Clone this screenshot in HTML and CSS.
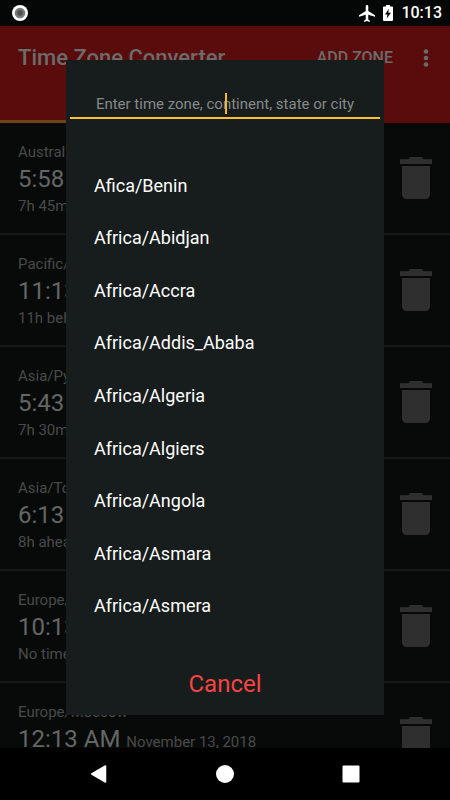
FILE: index.html
```html
<!DOCTYPE html>
<html lang="en">
<head>
<meta charset="utf-8">
<meta name="viewport" content="width=device-width, initial-scale=1">
<title>Time Zone Converter</title>
<link rel="stylesheet" href="styles.css">
</head>
<body>
<svg class="defs" aria-hidden="true">
  <symbol id="trash" viewBox="0 0 32 42">
    <path d="M0 2.300h8.500L10.500 0h11l2 2.300H32V7H0z"/>
    <path d="M2 9h28v28.500a4.500 4.500 0 0 1-4.500 4.500h-19A4.500 4.500 0 0 1 2 37.500z"/>
  </symbol>
</svg>
<div class="screen">
  <header class="status">
    <svg class="record" width="16" height="16" viewBox="0 0 16 16" aria-hidden="true">
      <circle cx="8" cy="8" r="8" fill="#fff"/><circle cx="8" cy="8" r="5.300" fill="#77797a"/><circle cx="8" cy="8" r="2.800" fill="#4c4e4f"/>
    </svg>
    <div class="status-end">
      <svg width="16" height="17" viewBox="2 2 19 20" aria-hidden="true"><path fill="#fff" d="M21 16v-2l-8-5V3.500a1.500 1.500 0 0 0-3 0V9l-8 5v2l8-2.500V19l-2 1.500V22l3.500-1 3.500 1v-1.500L13 19v-5.500z"/></svg>
      <svg width="10" height="16" viewBox="0 0 10 16" aria-hidden="true"><path fill="#fff" d="M3 0h4v1.500h2a1 1 0 0 1 1 1V15a1 1 0 0 1-1 1H1a1 1 0 0 1-1-1V2.500a1 1 0 0 1 1-1h2z"/><path fill="#050706" d="M5.800 3.800 2 9.500h2.400L3.700 13.500 8 7.800H5.300z"/></svg>
      <span class="clock">10:13</span>
    </div>
  </header>
  <main class="app">
    <div class="appbar">
      <div class="toolbar">
        <h1>Time Zone Converter</h1>
        <button class="add" type="button">ADD ZONE</button>
        <button class="more" type="button" aria-label="More options">
          <svg width="6" height="18" viewBox="0 0 6 18"><circle cx="3" cy="2.500" r="2.300"/><circle cx="3" cy="9" r="2.300"/><circle cx="3" cy="15.500" r="2.300"/></svg>
        </button>
      </div>
      <div class="tabs"><div class="tab active"></div><div class="tab"></div></div>
    </div>
    <ul class="zones">
      <li><div class="info"><p>Australia/Eucla</p><p class="time">5:58</p><p>7h 45m ahead</p></div><button type="button" aria-label="Delete"><svg><use href="#trash"/></svg></button></li>
      <li><div class="info"><p>Pacific/Midway</p><p class="time">11:13</p><p>11h behind</p></div><button type="button" aria-label="Delete"><svg><use href="#trash"/></svg></button></li>
      <li><div class="info"><p>Asia/Pyongyang</p><p class="time">5:43</p><p>7h 30m ahead</p></div><button type="button" aria-label="Delete"><svg><use href="#trash"/></svg></button></li>
      <li><div class="info"><p>Asia/Tokyo</p><p class="time">6:13</p><p>8h ahead</p></div><button type="button" aria-label="Delete"><svg><use href="#trash"/></svg></button></li>
      <li><div class="info"><p>Europe/London</p><p class="time">10:13</p><p>No time difference</p></div><button type="button" aria-label="Delete"><svg><use href="#trash"/></svg></button></li>
      <li><div class="info"><p>Europe/Moscow</p><p class="time">12:13 AM <small>November 13, 2018</small></p></div><button type="button" aria-label="Delete"><svg><use href="#trash"/></svg></button></li>
    </ul>
    <div class="overlay">
      <div class="dialog" role="dialog" aria-label="Add zone">
        <div class="search">
          <input type="text" aria-label="Time zone" placeholder="Enter time zone, continent, state or city">
          <span class="caret"></span>
        </div>
        <ul class="results">
          <li>Afica/Benin</li>
          <li>Africa/Abidjan</li>
          <li>Africa/Accra</li>
          <li>Africa/Addis_Ababa</li>
          <li>Africa/Algeria</li>
          <li>Africa/Algiers</li>
          <li>Africa/Angola</li>
          <li>Africa/Asmara</li>
          <li>Africa/Asmera</li>
        </ul>
        <button class="cancel" type="button">Cancel</button>
      </div>
    </div>
  </main>
  <nav class="nav">
    <button type="button" aria-label="Back"><svg width="18" height="18" viewBox="0 0 18 18"><path d="M15.500 1v16L1.800 9z" stroke="#fff" stroke-width="1.500" stroke-linejoin="round"/></svg></button>
    <button type="button" aria-label="Home"><svg width="18" height="18" viewBox="0 0 18 18"><circle cx="9" cy="9" r="9"/></svg></button>
    <button type="button" aria-label="Recent"><svg width="18" height="18" viewBox="0 0 18 18"><rect x="0.500" y="0.500" width="17" height="17" rx="1"/></svg></button>
  </nav>
</div>
</body>
</html>
```

FILE: styles.css
```css
* { box-sizing: border-box; }
body, h1, p, ul { margin: 0; padding: 0; }
body { background: #000; color: #fff; font-family: Roboto, sans-serif; }
ul { list-style: none; }
button { background: none; border: 0; padding: 0; font: inherit; color: inherit; display: block; }
svg { display: block; }
.defs { position: absolute; width: 0; height: 0; }

.screen { display: flex; flex-direction: column; height: 100vh; }

.status {
  display: flex; align-items: center; justify-content: space-between;
  height: 26px; padding: 0 8px 0 12px; background: #050706; flex: none;
}
.status-end { display: flex; align-items: center; gap: 8px; }
.clock { font-size: 16px; line-height: 24px; font-weight: 500; }

.app { position: relative; flex: 1; min-height: 0; overflow: hidden; background: #080a09; }
.appbar { background: #5a0c0c; color: #6b6b6b; }
.toolbar { display: flex; align-items: center; height: 64px; padding: 0 21px 0 18px; }
.toolbar h1 { flex: 1; font-size: 22px; line-height: 28px; font-weight: 500; }
.add { font-size: 16px; line-height: 24px; font-weight: 500; }
.more { margin-left: 30px; fill: #6b6b6b; }
.tabs { display: flex; height: 33px; }
.tab { flex: 1; }
.tab.active { border-bottom: 3px solid #6e4514; }

.zones li {
  display: flex; justify-content: space-between; align-items: flex-start;
  height: 112px; padding: 18px 18px 0; border-bottom: 2px solid #161817;
}
.info { color: #484a49; font-size: 15px; line-height: 22px; }
.time { color: #646665; font-size: 24px; line-height: 32px; }
.time small { color: #484a49; font-size: 15px; }
.zones button { padding-top: 16px; }
.zones svg { width: 32px; height: 42px; fill: #2f2f2f; }

.overlay { position: absolute; inset: 0; display: flex; align-items: center; justify-content: center; }
.dialog {
  display: flex; flex-direction: column; width: calc(100% - 132px);
  padding: 28px 4px 15px; background: #171c1c;
}
.search { position: relative; }
.search input {
  display: block; width: 100%; height: 31px; padding: 3px 0 0; border: 0;
  border-bottom: 2px solid #fbc02d; background: none; outline: 0;
  color: #fff; font: 15px/24px Roboto, sans-serif; text-align: center;
}
.search input::placeholder { color: #868989; opacity: 1; }
.caret { position: absolute; left: 50%; top: 5px; width: 2px; height: 21px; background: #fbb829; }
.results { display: grid; grid-auto-rows: 1fr; align-items: center; height: 473px; margin: 41px 24px 0; font-size: 18px; line-height: 24px; }
.cancel { align-self: center; margin-top: 35px; color: #f44444; font-size: 24px; line-height: 32px; }

.nav { display: flex; align-items: center; justify-content: center; gap: 108px; height: 52px; background: #000; flex: none; }
.nav svg { fill: #fff; }
```
